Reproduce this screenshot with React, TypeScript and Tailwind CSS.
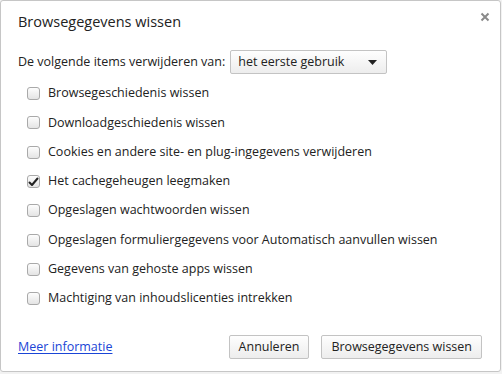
const items = [
  { label: "Browsegeschiedenis wissen", checked: false },
  { label: "Downloadgeschiedenis wissen", checked: false },
  { label: "Cookies en andere site- en plug-ingegevens verwijderen", checked: false },
  { label: "Het cachegeheugen leegmaken", checked: true },
  { label: "Opgeslagen wachtwoorden wissen", checked: false },
  { label: "Opgeslagen formuliergegevens voor Automatisch aanvullen wissen", checked: false },
  { label: "Gegevens van gehoste apps wissen", checked: false },
  { label: "Machtiging van inhoudslicenties intrekken", checked: false },
];

function Checkbox({ checked }: { checked: boolean }) {
  return (
    <span className="w-[13px] h-[13px] rounded-[3px] border border-[#a9a9a9] bg-gradient-to-b from-[#fdfdfd] to-[#e4e4e4] flex items-center justify-center shrink-0">
      {checked && (
        <svg width="11" height="10" viewBox="0 0 11 10">
          <path d="M1.5 5.5 L4 8 L9.5 1.5" stroke="#222" strokeWidth="2" fill="none" strokeLinecap="round" strokeLinejoin="round" />
        </svg>
      )}
    </span>
  );
}

export default function App() {
  return (
    <div className="w-[502px] h-[374px] bg-[#f2f2f2] font-['Open_Sans',sans-serif] text-[#333]">
      <div className="w-[501px] h-[372px] bg-white border border-[#c6c6c6] rounded-[3px] flex flex-col relative">
        {/* Close */}
        <button className="absolute right-[8px] top-[9px] w-[14px] h-[14px] flex items-center justify-center">
          <svg width="10" height="10" viewBox="0 0 10 10">
            <path d="M1.5 1.5 L8.5 8.5 M8.5 1.5 L1.5 8.5" stroke="#8a8a8a" strokeWidth="2" />
          </svg>
        </button>

        <h1 className="pl-[17px] pt-[11px] text-[14.5px] leading-[20px] text-[#222]">Browsegegevens wissen</h1>

        <div className="flex items-center pl-[17px] mt-[18px] text-[12.5px] text-[#222]">
          <span>De volgende items verwijderen van:</span>
          <div className="ml-[5px] w-[157px] h-[24px] border border-[#c3c3c3] rounded-[2px] bg-gradient-to-b from-[#fefefe] to-[#ededed] flex items-center justify-between pl-[7px] pr-[9px]">
            <span>het eerste gebruik</span>
            <svg width="9" height="5" viewBox="0 0 9 5">
              <path d="M0 0 H9 L4.5 5 Z" fill="#222" />
            </svg>
          </div>
        </div>

        <div className="flex flex-col pl-[26px] mt-[5px]">
          {items.map((item) => (
            <label key={item.label} className="h-[29.3px] flex items-center gap-[8px] text-[12.5px] text-[#222]">
              <Checkbox checked={item.checked} />
              <span>{item.label}</span>
            </label>
          ))}
        </div>

        <div className="mt-auto mb-[12px] flex items-center pl-[17px] pr-[18px]">
          <a className="text-[12.5px] text-[#1a45d6] underline underline-offset-2">Meer informatie</a>
          <div className="ml-auto flex gap-[12px]">
            <button className="h-[24px] px-[9px] border border-[#c3c3c3] rounded-[2px] bg-gradient-to-b from-[#fefefe] to-[#ededed] text-[12.5px] text-[#222]">
              Annuleren
            </button>
            <button className="h-[24px] px-[9px] border border-[#c3c3c3] rounded-[2px] bg-gradient-to-b from-[#fefefe] to-[#ededed] text-[12.5px] text-[#222]">
              Browsegegevens wissen
            </button>
          </div>
        </div>
      </div>
    </div>
  );
}
